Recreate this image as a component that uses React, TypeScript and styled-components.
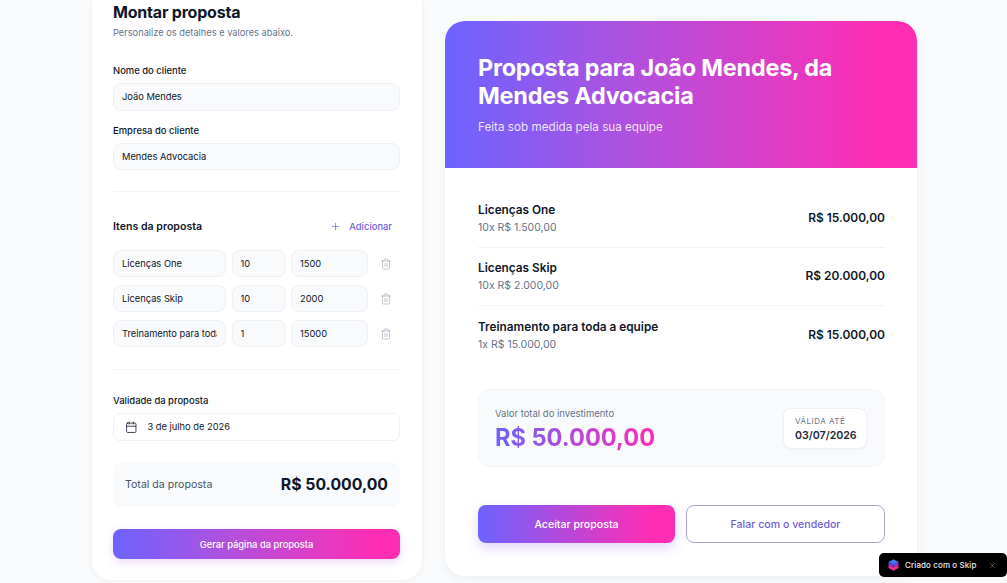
import React from "react";
import styled, { createGlobalStyle } from "styled-components";
import { Plus, Trash2, Calendar, X } from "lucide-react";

const gradient = "linear-gradient(90deg, #6d63ff 0%, #b44fdc 42%, #ff2db4 92%)";

const Global = createGlobalStyle`
  html, body { margin: 0; padding: 0; height: 100%; overflow: hidden; background: #f9fafb; }
  body { font-family: Inter, "Noto Sans", sans-serif; color: #0f172a; -webkit-font-smoothing: antialiased; }
  * { box-sizing: border-box; }
`;

const Page = styled.div`
  display: grid;
  grid-template-columns: 330px 472px;
  column-gap: 23px;
  align-items: start;
  padding-left: 92px;
  height: 583px;
`;

const Builder = styled.section`
  height: 580px;
  background: #fff;
  border-radius: 0 0 20px 20px;
  box-shadow: 0 1px 6px rgba(15, 23, 42, 0.05);
  padding: 2px 22px 0 21px;
  display: flex;
  flex-direction: column;
`;

const Title = styled.h1`
  margin: 0;
  font-size: 16px;
  line-height: 20px;
  font-weight: 700;
  letter-spacing: -0.2px;
  color: #0f172a;
`;

const Subtitle = styled.p`
  margin: 4px 0 0;
  font-size: 9.25px;
  line-height: 14px;
  color: #64748b;
`;

const FieldLabel = styled.label<{ $top: number }>`
  display: block;
  margin-top: ${(p) => p.$top}px;
  font-size: 9.45px;
  line-height: 12px;
  font-weight: 500;
  color: #0f172a;
`;

const Input = styled.input<{ $width?: number }>`
  display: block;
  width: ${(p) => (p.$width ? `${p.$width}px` : "100%")};
  height: 27.5px;
  flex: none;
  padding: 0 8px;
  border: 1px solid #eef0f4;
  border-radius: 8px;
  background: #f8fafc;
  font-family: inherit;
  font-size: 9.3px;
  color: #0f172a;
  outline: none;
`;

const NameInput = styled(Input)`
  margin-top: 6px;
`;

const RowInput = styled(Input)`
  height: 27px;
`;

const Divider = styled.hr<{ $top: number }>`
  margin: ${(p) => p.$top}px 0 0;
  border: 0;
  height: 1px;
  background: #f1f3f6;
`;

const ItemsHead = styled.div`
  margin-top: 27px;
  display: flex;
  align-items: center;
  justify-content: space-between;
  height: 14px;
  padding-right: 8px;
`;

const ItemsTitle = styled.h2`
  margin: 0;
  font-size: 10.6px;
  font-weight: 600;
  color: #0f172a;
`;

const AddButton = styled.div`
  display: flex;
  align-items: center;
  gap: 8.5px;
  font-size: 9.4px;
  font-weight: 500;
  color: #6f5fd6;
`;

const Rows = styled.div`
  margin-top: 17px;
  display: flex;
  flex-direction: column;
  gap: 8px;
`;

const Row = styled.div`
  display: flex;
  align-items: center;
  gap: 5.5px;
`;

const TrashSlot = styled.div`
  margin-left: 6.5px;
  display: flex;
  color: #a3aab6;
`;

const DateField = styled.div`
  margin-top: 6.5px;
  height: 27.5px;
  display: flex;
  align-items: center;
  gap: 10px;
  padding-left: 11px;
  border: 1px solid #eef0f4;
  border-radius: 7px;
  background: #fff;
  font-size: 9.3px;
  color: #0f172a;
`;

const TotalBox = styled.div`
  margin-top: 21.5px;
  height: 45px;
  padding: 0 12px;
  display: flex;
  align-items: center;
  justify-content: space-between;
  background: #f8fafc;
  border-radius: 9px;
`;

const TotalLabel = styled.span`
  font-size: 10.6px;
  color: #475569;
`;

const TotalValue = styled.span`
  font-size: 15.8px;
  font-weight: 700;
  color: #0f172a;
`;

const GenerateButton = styled.div`
  margin-top: 22px;
  height: 30px;
  border-radius: 8px;
  background: ${gradient};
  box-shadow: 0 3px 8px rgba(180, 79, 220, 0.22);
  display: flex;
  align-items: center;
  justify-content: center;
  color: #fff;
  font-size: 9.35px;
  font-weight: 500;
`;

const Preview = styled.section`
  margin-top: 21px;
  height: 555px;
  background: #fff;
  border-radius: 20px;
  overflow: hidden;
  box-shadow: 0 2px 10px rgba(15, 23, 42, 0.05);
`;

const Hero = styled.header`
  height: 147px;
  padding: 33px 33px 0;
  background: ${gradient};
  color: #fff;
`;

const HeroTitle = styled.h2`
  margin: 0;
  font-size: 23.4px;
  line-height: 28px;
  font-weight: 700;
  letter-spacing: -0.2px;
`;

const HeroSub = styled.p`
  margin: 9px 0 0;
  font-size: 11.7px;
  line-height: 16px;
  color: rgba(255, 255, 255, 0.85);
`;

const Body = styled.div`
  padding: 22px 32px 0 33px;
`;

const Item = styled.div<{ $last?: boolean }>`
  height: 58px;
  display: flex;
  align-items: center;
  justify-content: space-between;
  border-bottom: ${(p) => (p.$last ? "none" : "1px solid #f1f3f6")};
`;

const ItemName = styled.div`
  font-size: 11.8px;
  line-height: 16px;
  font-weight: 600;
  color: #0f172a;
`;

const ItemMeta = styled.div`
  margin-top: 3px;
  font-size: 10.5px;
  line-height: 14px;
  color: #64748b;
`;

const ItemPrice = styled.div`
  margin-bottom: 2px;
  font-size: 11.95px;
  font-weight: 600;
  color: #0f172a;
`;

const Summary = styled.div`
  margin-top: 25px;
  height: 78px;
  padding: 0 17px 0 16px;
  display: flex;
  align-items: center;
  justify-content: space-between;
  background: #f9fafb;
  border: 1px solid #f5f6f8;
  border-radius: 12px;
`;

const SummaryText = styled.div`
  margin-top: 5px;
`;

const SummaryLabel = styled.div`
  font-size: 9.5px;
  line-height: 12px;
  color: #64748b;
`;

const SummaryValue = styled.div`
  margin-top: 3px;
  font-size: 23.6px;
  line-height: 30px;
  font-weight: 700;
  background: linear-gradient(90deg, #6d63ff, #ff2db4);
  -webkit-background-clip: text;
  background-clip: text;
  color: transparent;
  width: fit-content;
`;

const ValidBadge = styled.div`
  width: 84px;
  height: 41px;
  padding: 6px 0 0 11px;
  background: #fff;
  border: 1px solid #eef0f4;
  border-radius: 8px;
  box-shadow: 0 1px 2px rgba(15, 23, 42, 0.04);
`;

const ValidLabel = styled.div`
  font-size: 8px;
  line-height: 12px;
  letter-spacing: 0.5px;
  color: #64748b;
`;

const ValidDate = styled.div`
  margin-top: 2px;
  font-size: 10.6px;
  line-height: 14px;
  font-weight: 600;
  color: #1e293b;
`;

const Actions = styled.div`
  margin-top: 38px;
  display: grid;
  grid-template-columns: 197px 199px;
  column-gap: 11px;
`;

const ActionBase = styled.div`
  height: 38px;
  border-radius: 8px;
  display: flex;
  align-items: center;
  justify-content: center;
  font-size: 10.6px;
  font-weight: 500;
`;

const AcceptButton = styled(ActionBase)`
  background: linear-gradient(90deg, #6d63ff 0%, #ff2db4 88%);
  color: #fff;
  box-shadow: 0 5px 12px rgba(140, 90, 240, 0.25);
`;

const TalkButton = styled(ActionBase)`
  background: #fff;
  border: 1px solid #a99fdc;
  color: #6f5fd6;
`;

const Toast = styled.div`
  position: fixed;
  left: 879px;
  top: 553px;
  width: 128px;
  height: 24px;
  background: #000;
  border-radius: 5px;
  display: flex;
  align-items: center;
  padding: 0 11px 0 9px;
  color: #fff;
  font-size: 8px;
  font-weight: 500;
`;

const ToastText = styled.span`
  margin-left: 6px;
  flex: 1;
  letter-spacing: 0.1px;
  color: #e8e8ea;
`;

const SkipLogo = () => (
  <svg width="11" height="12" viewBox="0 0 11 12">
    <path d="M5.5 0.3 10.5 3 5.5 5.6 0.5 3Z" fill="#3f7bf2" />
    <path d="M0.5 3 5.5 5.6V8.6L0.5 6Z" fill="#6a3fe0" />
    <path d="M10.5 3 5.5 5.6V8.6L10.5 6Z" fill="#8a3fdc" />
    <path d="M0.5 6 5.5 8.6 10.5 6V9L5.5 11.7 0.5 9Z" fill="#f0308f" />
  </svg>
);

const rows = [
  ["Licenças One", "10", "1500"],
  ["Licenças Skip", "10", "2000"],
  ["Treinamento para toda a equipe", "1", "15000"],
];

const lines = [
  ["Licenças One", "10x R$ 1.500,00", "R$ 15.000,00"],
  ["Licenças Skip", "10x R$ 2.000,00", "R$ 20.000,00"],
  ["Treinamento para toda a equipe", "1x R$ 15.000,00", "R$ 15.000,00"],
];

export default function App() {
  return (
    <>
      <Global />
      <Page>
        <Builder>
          <Title>Montar proposta</Title>
          <Subtitle>Personalize os detalhes e valores abaixo.</Subtitle>
          <FieldLabel $top={25}>Nome do cliente</FieldLabel>
          <NameInput readOnly value="João Mendes" />
          <FieldLabel $top={14}>Empresa do cliente</FieldLabel>
          <NameInput readOnly value="Mendes Advocacia" />
          <Divider $top={21} />
          <ItemsHead>
            <ItemsTitle>Itens da proposta</ItemsTitle>
            <AddButton>
              <Plus size={11} strokeWidth={1.5} />
              Adicionar
            </AddButton>
          </ItemsHead>
          <Rows>
            {rows.map((r) => (
              <Row key={r[0]}>
                <RowInput readOnly value={r[0]} $width={113} />
                <RowInput readOnly value={r[1]} $width={54} />
                <RowInput readOnly value={r[2]} $width={77} />
                <TrashSlot>
                  <Trash2 size={12} strokeWidth={1.3} />
                </TrashSlot>
              </Row>
            ))}
          </Rows>
          <Divider $top={22} />
          <FieldLabel $top={24.5}>Validade da proposta</FieldLabel>
          <DateField>
            <Calendar size={12.5} strokeWidth={1.5} />
            3 de julho de 2026
          </DateField>
          <TotalBox>
            <TotalLabel>Total da proposta</TotalLabel>
            <TotalValue>R$ 50.000,00</TotalValue>
          </TotalBox>
          <GenerateButton>Gerar página da proposta</GenerateButton>
        </Builder>
        <Preview>
          <Hero>
            <HeroTitle>Proposta para João Mendes, da Mendes Advocacia</HeroTitle>
            <HeroSub>Feita sob medida pela sua equipe</HeroSub>
          </Hero>
          <Body>
            {lines.map((l, i) => (
              <Item key={l[0]} $last={i === lines.length - 1}>
                <div>
                  <ItemName>{l[0]}</ItemName>
                  <ItemMeta>{l[1]}</ItemMeta>
                </div>
                <ItemPrice>{l[2]}</ItemPrice>
              </Item>
            ))}
            <Summary>
              <SummaryText>
                <SummaryLabel>Valor total do investimento</SummaryLabel>
                <SummaryValue>R$ 50.000,00</SummaryValue>
              </SummaryText>
              <ValidBadge>
                <ValidLabel>VÁLIDA ATÉ</ValidLabel>
                <ValidDate>03/07/2026</ValidDate>
              </ValidBadge>
            </Summary>
            <Actions>
              <AcceptButton>Aceitar proposta</AcceptButton>
              <TalkButton>Falar com o vendedor</TalkButton>
            </Actions>
          </Body>
        </Preview>
      </Page>
      <Toast>
        <SkipLogo />
        <ToastText>Criado com o Skip</ToastText>
        <X size={7} strokeWidth={1.6} color="#bbb" />
      </Toast>
    </>
  );
}
